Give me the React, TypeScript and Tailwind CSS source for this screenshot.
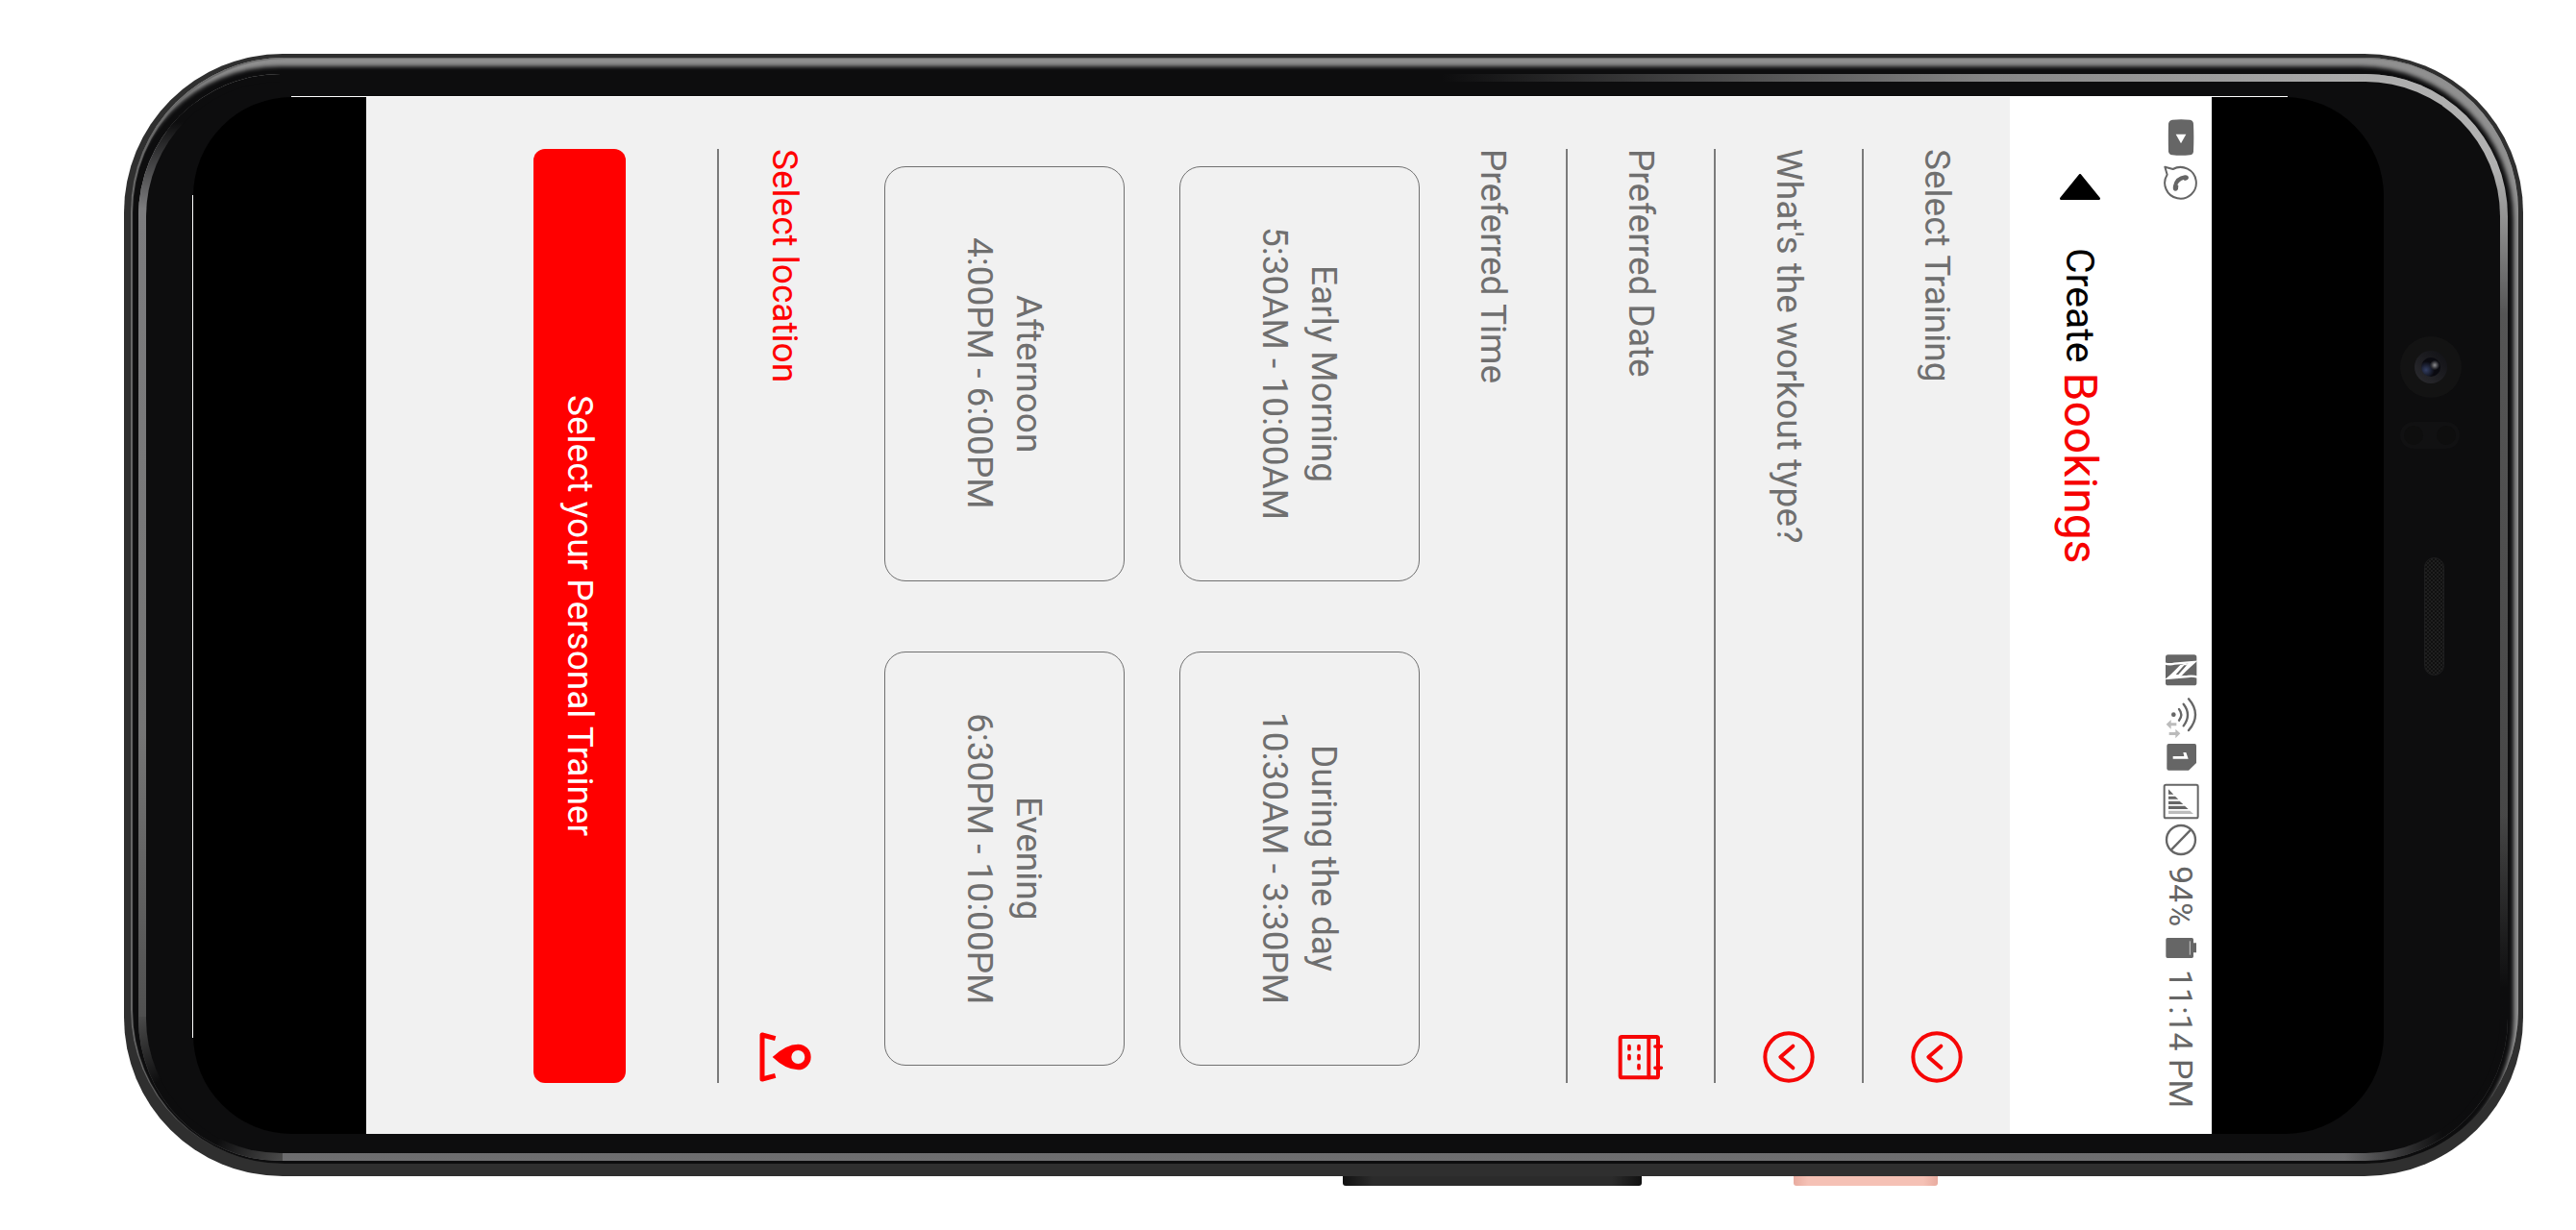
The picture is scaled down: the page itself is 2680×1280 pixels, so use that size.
import React from 'react';

const trainings = ['Select Training', 'Personal Training', 'Group Training'];
const workouts = ["What's the workout type?", 'Strength', 'Cardio', 'Yoga'];

const slots = [
  { name: 'Early Morning', hours: '5:30AM - 10:00AM' },
  { name: 'During the day', hours: '10:30AM - 3:30PM' },
  { name: 'Afternoon', hours: '4:00PM - 6:00PM' },
  { name: 'Evening', hours: '6:30PM - 10:00PM' },
];

function VideoIcon() {
  return (
    <svg className="h-[38px] w-9 shrink-0" viewBox="95 70 108 114" aria-hidden="true">
      <path d="M122 72Q149 69 177 72Q187 73 188 84Q190 127 188 171Q187 181 177 182Q149 185 122 182Q112 181 110 171Q109 127 110 84Q112 73 122 72Z" fill="#666" />
      <path d="M133 117H165L149 146Z" fill="#fff" />
    </svg>
  );
}

function ChatIcon() {
  return (
    <svg className="h-9 w-9 shrink-0" viewBox="95 213 108 108" aria-hidden="true">
      <path d="M99 218L124 225A49 49 0 1 1 106 242Z" fill="none" stroke="#666" strokeWidth="6" strokeLinejoin="round" />
      <path d="M125 277Q122 291 130 293Q138 294 140 287L141 277L138 274Q144 262 157 258L161 261Q172 259 173 252Q172 243 161 244Q131 248 125 277Z" fill="#666" />
    </svg>
  );
}

function NfcIcon() {
  return (
    <svg className="h-[39px] w-9 shrink-0" viewBox="94 63 108 117" aria-hidden="true">
      <rect x="100" y="64" width="97" height="96" rx="8" fill="#666" />
      <g fill="none" stroke="#fff" strokeWidth="7">
        <path d="M97 91Q112 96 128 92L190 87L134 136" />
        <path d="M200 134Q184 129 168 132L108 137L162 94" />
      </g>
      <path d="M176 86L194 84L150 130L134 136L124 132Z" fill="#fff" />
      <path d="M122 138L103 139L146 96L162 92L172 96Z" fill="#fff" />
      <path d="M158 97L132 126H140L166 97Z" fill="#666" />
    </svg>
  );
}

function WifiIcon() {
  return (
    <svg className="h-[51px] w-9 shrink-0" viewBox="94 180 108 153" aria-hidden="true">
      <circle cx="125" cy="251" r="7" fill="#666" />
      <g fill="none" stroke="#666" strokeWidth="7" strokeLinecap="round">
        <path d="M142 234Q156 251 142 269" />
        <path d="M156 218Q182 251 156 286" />
        <path d="M172 202Q214 251 172 300" />
      </g>
      <g fill="#bcbcbc">
        <path d="M102 281L117 267V277H134V286H117V296Z" />
        <path d="M146 310L131 296V306H111V315H131V325Z" />
      </g>
    </svg>
  );
}

function SimIcon() {
  return (
    <svg className="h-[37px] w-9 shrink-0" viewBox="94 333 108 111" aria-hidden="true">
      <path d="M110 342H191Q196 342 196 348V402L172 425H110Q104 425 104 419V348Q104 342 110 342Z" fill="#666" />
      <path d="M123 381H158L155 369H164L171 389H123Z" fill="#fff" />
    </svg>
  );
}

function SignalIcon() {
  return (
    <svg className="h-[47px] w-[38px] shrink-0" viewBox="91 444 114 141" aria-hidden="true">
      <rect x="96" y="470" width="105" height="104" rx="5" fill="none" stroke="#666" strokeWidth="6" />
      <path d="M109 484L125 500H109ZM109 506H130L140 515H109ZM109 521H144L155 531H109ZM109 536H160L171 546H109Z" fill="#666" />
      <path d="M109 551H176L187 561H109Z" fill="#bcbcbc" />
    </svg>
  );
}

function BlockedIcon() {
  return (
    <svg className="h-[42px] w-9 shrink-0" viewBox="94 585 108 126" aria-hidden="true">
      <circle cx="148" cy="642" r="45" fill="none" stroke="#666" strokeWidth="7" />
      <path d="M117 674L179 610" stroke="#666" strokeWidth="7" />
    </svg>
  );
}

function BatteryIcon() {
  return (
    <svg className="h-[21px] w-9 shrink-0" viewBox="94 228 108 63" aria-hidden="true">
      <path d="M106 228H182Q187 228 187 233V244H196V274H187V286Q187 291 182 291H106Q101 291 101 286V233Q101 228 106 228Z" fill="#666" />
      <path d="M176 238V281" stroke="#fff" strokeWidth="2" />
    </svg>
  );
}

function BackIcon() {
  return (
    <svg className="h-[27px] w-[42px]" viewBox="0 0 126 81" aria-hidden="true">
      <path d="M63 4L122 77H4Z" fill="#000" stroke="#000" strokeWidth="8" strokeLinejoin="round" />
    </svg>
  );
}

function ChevronCircle() {
  return (
    <svg className="h-[54px] w-[54px] shrink-0" viewBox="0 0 162 162" fill="none" stroke="#f60606" strokeWidth="12" aria-hidden="true">
      <circle cx="81" cy="81" r="74" />
      <path d="M94 47L55 81L94 115" strokeLinecap="round" strokeLinejoin="round" />
    </svg>
  );
}

function CalendarIcon() {
  return (
    <svg className="h-[54px] w-12 shrink-0" viewBox="69 100 144 162" fill="none" stroke="#f60606" strokeWidth="12" strokeLinecap="round" aria-hidden="true">
      <rect x="77" y="118" width="118" height="127" rx="5" />
      <path d="M166 118V245" />
      <path d="M186 148H205M186 215H205" strokeWidth="11" />
      <path d="M105 147V156M135 147V156M105 177V186M135 177V186M135 207V216" strokeWidth="11" />
    </svg>
  );
}

function LocationIcon() {
  return (
    <svg className="h-[54px] w-[54px] shrink-0" viewBox="57 70 162 162" aria-hidden="true">
      <path d="M107 93L66 82V220L107 209" fill="none" stroke="#f00" strokeWidth="15" strokeLinejoin="round" />
      <path fillRule="evenodd" d="M98 151Q140 111 178 111A40 40 0 0 1 178 191Q140 191 98 151ZM178 130A21 21 0 1 0 178 172A21 21 0 1 0 178 130Z" fill="#f00" />
    </svg>
  );
}

const rowClass = 'flex w-[154px] items-center border-l-2 border-[#7b7b7b]';

function SelectRow({ label, options }: { label: string; options: string[] }) {
  return (
    <div className={rowClass}>
      <select aria-label={label} defaultValue={options[0]} className="min-h-0 flex-1 appearance-none bg-transparent leading-[51px] outline-none">
        {options.map((o) => (
          <option key={o}>{o}</option>
        ))}
      </select>
      <ChevronCircle />
    </div>
  );
}

function StatusBar() {
  return (
    <div className="flex w-16 items-center justify-between pt-[23px] pb-[27px] text-[34px] leading-10 text-[#666]">
      <div className="flex items-center gap-[10px]">
        <VideoIcon />
        <ChatIcon />
      </div>
      <div className="flex items-center">
        <NfcIcon />
        <WifiIcon />
        <SimIcon />
        <SignalIcon />
        <BlockedIcon />
        <span className="mt-1 mb-3">94%</span>
        <BatteryIcon />
        <time className="mt-3">11:14 PM</time>
      </div>
    </div>
  );
}

function Booking() {
  return (
    <div className="flex min-w-0 flex-1 flex-col bg-[#f1f1f1] font-[Roboto,sans-serif] text-[37px] leading-[51px] text-[#6f6f6f] [writing-mode:vertical-rl]">
      <header className="flex w-[210px] flex-col bg-white">
        <StatusBar />
        <div className="flex flex-1 items-center pt-20">
          <button type="button" aria-label="Back">
            <BackIcon />
          </button>
          <h1 className="mt-[50px] text-[41px] text-black">
            Create <span className="text-[48px] text-[#f60000]">Bookings</span>
          </h1>
        </div>
      </header>

      <form className="flex flex-1 flex-col pt-[54px] pb-[53px]" onSubmit={(e) => e.preventDefault()}>
        <SelectRow label="Training" options={trainings} />
        <SelectRow label="Workout type" options={workouts} />
        <button type="button" className={rowClass}>
          <span className="flex-1 text-start">Preferred Date</span>
          <CalendarIcon />
        </button>

        <h2 id="time" className="flex w-[152px] items-center">Preferred Time</h2>
        <div role="radiogroup" aria-labelledby="time" className="grid grid-cols-2 gap-x-[73px] gap-y-[57px] pt-[18px] pb-[18px]">
          {slots.map((s) => (
            <label key={s.name} className="relative flex w-[250px] flex-col justify-center rounded-[22px] border border-[#707070] text-center">
              <input type="radio" name="slot" value={s.name} className="sr-only" />
              <span>{s.name}</span>
              <span>{s.hours}</span>
            </label>
          ))}
        </div>

        <button type="button" className="ml-[95px] flex w-[174px] items-center border-l-2 border-[#7b7b7b] pr-[35px] text-[#f00]">
          <span className="flex-1 text-start">Select location</span>
          <LocationIcon />
        </button>
        <button type="submit" className="w-24 rounded-xl bg-[#f00] text-center text-white">
          Select your Personal Trainer
        </button>
      </form>
    </div>
  );
}

function FrontSensors() {
  return (
    <div className="flex w-[145px] flex-col items-start pt-[249px] pl-[17px]">
      <div className="flex size-16 items-center justify-center rounded-full bg-[#131313]">
        <div className="flex size-[34px] items-center justify-center rounded-full bg-linear-to-tr from-[#2c2c30] to-[#101014]">
          <div className="size-5 rounded-full bg-[radial-gradient(circle_at_70%_40%,#8d8d90_0,#34343a_18%,transparent_28%),radial-gradient(circle_at_25%_65%,#333f63_0,#0a0a10_45%)]" />
        </div>
      </div>
      <div className="mt-[25px] flex h-7 w-[62px] items-center justify-between rounded-full bg-[#111112] px-1">
        <div className="size-5 rounded-full bg-[#0e0e0e]" />
        <div className="size-5 rounded-full bg-[#0e0e0e]" />
      </div>
      <div className="mt-[113px] ml-[25px] h-[123px] w-[21px] rounded-full border border-[#1e1e1f] bg-[#161616] bg-[repeating-conic-gradient(#1f1f1f_0_25%,#101010_0_50%)] bg-size-[4px_4px]" />
    </div>
  );
}

export default function App() {
  return (
    <main className="flex min-h-screen flex-col bg-white pt-14 pr-[55px] pb-[46px] pl-[129px]">
      <div className="relative flex flex-1 rounded-[165px] bg-[#2f2f2f] pt-[45px] pb-11 pl-[72px]">
        <div className="absolute top-1 right-[5px] bottom-[13px] left-[7px] rounded-[160px] bg-[#0d0d0e] shadow-[inset_2px_1px_1px_#6a6a6a,inset_-1px_2px_1px_#909090,inset_-5px_9px_4px_#909090]" />
        <div className="absolute top-[21px] right-4 bottom-4 left-[15px] overflow-hidden rounded-[148px] bg-[linear-gradient(#b4b4b4_0,#b0b0b0_100px,#555_250px,#444_80%,#6e6e70_100%)] p-2">
          <div className="absolute top-0 right-0 left-0 h-[60px] bg-[linear-gradient(to_right,#0d0d0e_55%,#858585_78%,#aaaaaa_93%,transparent)]" />
          <div className="absolute top-0 bottom-[150px] left-0 w-[60px] bg-[linear-gradient(#0d0d0e_50px,#7c7c7e_140px,#757575_70%,#505050)]" />
          <div className="absolute bottom-0 left-0 size-[150px] bg-[radial-gradient(circle_at_30%_70%,#0d0d0e_30%,#505050_80%)]" />
          <div className="absolute right-0 bottom-[60px] h-[300px] w-[60px] bg-linear-to-b from-transparent to-[#0d0d0e] to-60%" />
          <div className="absolute right-0 bottom-0 h-[60px] w-[170px] bg-linear-to-l from-[#0d0d0e] from-40% to-transparent" />
          <div className="relative h-full rounded-[140px] bg-[#0d0d0e]" />
        </div>

        <div className="relative flex min-w-0 flex-1">
          <div className="absolute -top-px right-[100px] left-[102px] h-px bg-white" />
          <div className="absolute top-[102px] bottom-[100px] -left-px w-px bg-white" />
          <div className="flex min-w-0 flex-1 overflow-hidden rounded-[103px] bg-black pr-[179px] pl-[180px]">
            <Booking />
          </div>
        </div>
        <div className="relative flex">
          <FrontSensors />
        </div>
      </div>
      <div className="mr-[609px] flex h-[10px] justify-end gap-[158px]">
        <div className="w-[311px] rounded-b-[3px] bg-[linear-gradient(to_right,#111,#2b2b2b_10%,#2b2b2b_90%,#111)]" />
        <div className="w-[150px] rounded-b-[3px] bg-[linear-gradient(to_right,#e8ab9f,#f5c1b5_10%,#f5c1b5_90%,#e8ab9f)]" />
      </div>
    </main>
  );
}
